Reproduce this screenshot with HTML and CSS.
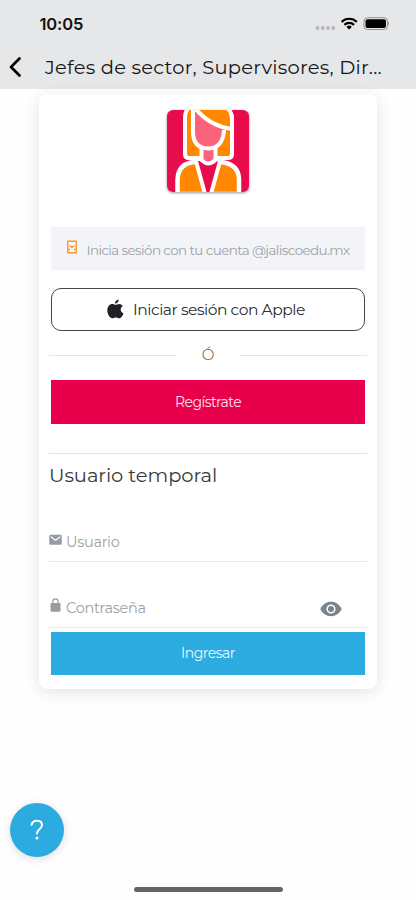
FILE: index.html
```html
<!DOCTYPE html>
<html lang="es">
<head>
<meta charset="utf-8">
<meta name="viewport" content="width=device-width, initial-scale=1">
<title>Iniciar sesión</title>
<link rel="stylesheet" href="styles.css">
</head>
<body>
<div class="screen">
  <header class="header">
    <div class="status">
      <span class="time">10:05</span>
      <svg class="status-icons" width="76" height="16" viewBox="0 0 76 16">
        <g fill="#b5b6b8"><circle cx="4.5" cy="12" r="1.9"/><circle cx="9.8" cy="12" r="1.9"/><circle cx="15" cy="12" r="1.9"/><circle cx="20.2" cy="12" r="1.9"/></g>
        <g fill="none" stroke="#000" stroke-width="2.2"><path d="M28.600 5.900a10.800 10.800 0 0 1 15.200 0"/><path d="M31.400 8.900a6.800 6.800 0 0 1 9.600 0"/></g>
        <path d="M33.500 10.900a3.900 3.900 0 0 1 5.400 0l-2.700 2.700z"/>
        <rect x="51" y="1.700" width="23.500" height="11.800" rx="3.400" fill="none" stroke="#8f9092"/>
        <rect x="52.500" y="3.200" width="20.500" height="8.800" rx="2"/>
        <path d="M75.200 5.800q1.600 1.800 0 3.600z" fill="#77787a"/>
      </svg>
    </div>
    <div class="bar">
      <svg class="back" width="14" height="22" viewBox="0 0 14 22"><path d="M11.500 2.500 3 11l8.500 8.500" fill="none" stroke="#000" stroke-width="2.700" stroke-linecap="round" stroke-linejoin="round"/></svg>
      <h1 class="title">Jefes de sector, Supervisores, Dir...</h1>
    </div>
  </header>

  <main class="card">
    <svg class="avatar" width="82" height="82" viewBox="0 0 82 82">
      <rect width="82" height="82" fill="#e90c4d"/>
      <path d="M22-3Q18 1 18 8V44Q18 48 22 48H61Q65 48 65 44V10Q65 1 59-3Z" fill="#ff8800" stroke="#fff" stroke-width="4"/>
      <path d="M10.500 84V70Q11 53 28 52H54Q72 54 72 70V84Z" fill="#ff8800" stroke="#fff" stroke-width="4.500"/>
      <path d="M30 51 39 84H43L52 51Z" fill="#e90c4d"/>
      <path d="M29 51 38 84M53 51 44 84" fill="none" stroke="#fff" stroke-width="4"/>
      <path d="M34.500 36V50Q41 57 48.500 50V36Z" fill="#f9647a" stroke="#fff" stroke-width="4"/>
      <path d="M27-2V22Q27 37 41.500 38Q56 37 57 20Q38 12 29-2Z" fill="#f9647a"/>
      <path d="M26-2V22Q26 38 41.500 38.500Q56 38 57 20" fill="none" stroke="#fff" stroke-width="4"/>
      <path d="M28-2Q42 16 65 19V-2Z" fill="#ff8800"/>
      <path d="M28-2Q42 16 65 19" fill="none" stroke="#fff" stroke-width="4"/>
      <path d="M59-3Q65 1 65 10V22" fill="none" stroke="#fff" stroke-width="4"/>
    </svg>

    <button class="btn institutional">
      <svg width="12" height="14" viewBox="0 0 12 14"><rect x=".5" y=".5" width="11" height="13" fill="#fff6e8"/><path d="M1.700 1.300H10.300V12.700H1.700ZM2 9.500H4M8 9.500H10M3.700 5.500l2.300 2 2.300-2" fill="none" stroke="#f29a3e" stroke-width="1.400"/></svg>
      <span class="t-inst">Inicia sesión con tu cuenta @jaliscoedu.mx</span>
    </button>

    <button class="btn apple">
      <svg width="17" height="20" viewBox="0 0 17 20" fill="#202124"><path d="M11.600.4c.2 2-1.500 4.200-3.600 4.200C7.800 2.600 9.500.8 11.600.4Z"/><path d="M8.600 5.800c.9 0 1.900-.9 3.500-.9 1.500 0 2.900.8 3.700 2-3.100 1.900-2.600 6 .8 7.300-.8 2.100-2.400 5.100-4.300 5.100-1.400 0-1.900-.8-3.500-.8s-2.200.8-3.500.8C2.800 19.300.3 15 .3 11.300.3 7.500 2.700 5 5.300 5c1.400 0 2.500.8 3.300.8Z"/></svg>
      <span class="t-apple">Iniciar sesión con Apple</span>
    </button>

    <div class="or"><i></i><span>Ó</span><i></i></div>

    <button class="btn register"><span class="t-reg">Regístrate</span></button>

    <section class="temporary">
      <h2 class="t-head">Usuario temporal</h2>
      <div class="field user">
        <svg width="13" height="12" viewBox="0 0 13 12"><rect x=".3" y=".8" width="12.400" height="10" rx="1.300" fill="#969aa1"/><path d="m1.800 2.800 4.700 3.500 4.700-3.500" fill="none" stroke="#fff" stroke-width="1.200"/></svg>
        <span class="t-user">Usuario</span>
      </div>
      <div class="field pass">
        <svg width="13" height="14" viewBox="0 0 13 14"><rect x="1.500" y="5" width="10" height="8.700" rx="1.300" fill="#969aa1"/><path d="M3.900 6V3.500a2.600 2.600 0 0 1 5.200 0V6" fill="none" stroke="#969aa1" stroke-width="1.200"/></svg>
        <span class="t-pass">Contraseña</span>
        <svg class="eye" width="22" height="16" viewBox="0 0 22 16"><path d="M.3 8C2.500 3.500 6.200.8 11 .8S19.500 3.500 21.700 8C19.500 12.500 15.800 15.200 11 15.200S2.500 12.500.3 8Z" fill="#7b838b"/><circle cx="11" cy="8" r="3.800" fill="none" stroke="#fff" stroke-width="1.500"/></svg>
      </div>
    </section>
    <button class="btn enter"><span class="t-enter">Ingresar</span></button>
  </main>

  <button class="help" aria-label="Ayuda"><svg width="16" height="22" viewBox="0 0 16 22"><path d="M2.500 5.900C3.200 3 5 1.800 7.800 1.800c3.100 0 5.200 1.500 5.200 4.200 0 4-5 4.400-5 8.500" fill="none" stroke="#fff" stroke-width="2" stroke-linecap="round"/><circle cx="8" cy="19" r="1.600" fill="#fff"/></svg></button>
  <div class="home"></div>
</div>
</body>
</html>
```
FILE: styles.css
```css
* { box-sizing: border-box; }
body { margin: 0; background: #fefefe; font-family: Montserrat, Inter, sans-serif; font-weight: 400; color: #333336; }
button { border: 0; padding: 0; font: inherit; color: inherit; }
svg { flex: none; display: block; }
h1, h2 { margin: 0; font-weight: 400; }
.screen { width: 416px; height: 900px; display: flex; flex-direction: column; overflow: hidden; }
.header { height: 88.5px; flex: none; background: #e6e7e9; }
.status { height: 48px; display: flex; align-items: center; justify-content: space-between; padding: 0 27.5px 0 39.5px; }
.time { font-family: Inter, sans-serif; font-size: 16.5px; font-weight: 600; color: #111; letter-spacing: -.15px; }
.bar { height: 38px; display: flex; align-items: center; padding-left: 8px; }
.title { margin-left: 23px; font-size: 19.5px; line-height: 38px; color: #151517; white-space: nowrap; letter-spacing: .22px; }
.card { width: 338px; height: 595px; flex: none; margin: 5.5px 0 0 39px; padding: 16px 10px 0; border-radius: 8px; background: #fff; box-shadow: 0 3px 16px rgba(0,0,0,.11); display: flex; flex-direction: column; }
.avatar { margin: 0 auto; border-radius: 6px; box-shadow: 0 1px 3px rgba(0,0,0,.4); }
.btn { height: 43.5px; flex: none; margin: 0 2px; display: flex; align-items: center; justify-content: center; white-space: nowrap; }
.institutional { margin-top: 34.5px; background: #f2f4f8; color: #a0a1a5; font-size: 13.5px; letter-spacing: -.62px; gap: 8px; }
.institutional svg { margin-bottom: 3px; }
.institutional span { margin-top: 3px; }
.apple { margin-top: 17.5px; padding-right: 4px; border: 1px solid #47474a; border-radius: 10px; background: #fff; font-size: 15.5px; letter-spacing: -.46px; color: #2c2d30; gap: 9px; }
.or { height: 20px; margin-top: 14px; display: flex; align-items: center; justify-content: space-between; font-size: 15px; font-weight: 300; color: #45464a; }
.or i { width: 127px; height: 1px; background: #e4e5e6; }
.or span { line-height: 20px; }
.register { margin-top: 15px; background: #e9004c; color: #ffe0ea; font-size: 14px; letter-spacing: -.55px; }
.temporary { margin-top: 29px; border-top: 1px solid #e3e4e5; }
.t-head { font-size: 19.5px; line-height: 26px; margin-top: 8px; color: #39393c; letter-spacing: -.06px; }
.field { display: flex; border-bottom: 1px solid #e7e7e9; font-size: 14.5px; letter-spacing: -.3px; line-height: 20px; color: #a0a1a5; gap: 4px; }
.user { height: 39px; margin-top: 35px; padding-top: 9px; }
.user svg { margin-top: 2px; }
.pass { height: 36px; margin-top: 30px; padding-top: 6px; }
.pass .eye { margin: 3px 25.5px 0 auto; }
.enter { margin-top: 4px; background: #2cabe0; color: #e9f8ff; font-size: 14px; letter-spacing: -.5px; }
.help { width: 54px; height: 54px; flex: none; margin: 113.5px 0 0 10px; border-radius: 50%; background: #2cabe0; display: flex; align-items: center; justify-content: center; box-shadow: 0 2px 10px rgba(0,0,0,.13); }
.home { width: 149px; height: 5px; flex: none; margin: 30px auto 0; border-radius: 3px; background: #656565; }
```
